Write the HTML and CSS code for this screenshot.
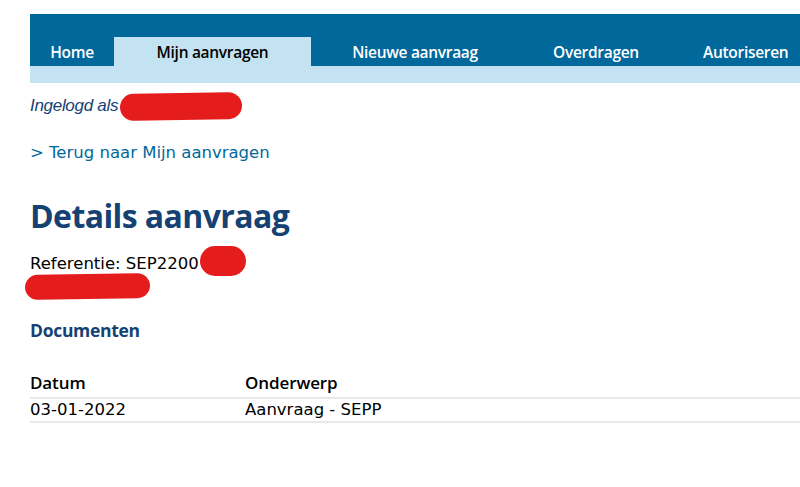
FILE: index.html
```html
<!DOCTYPE html>
<html lang="nl">
<head>
<meta charset="utf-8">
<title>Details aanvraag</title>
<link rel="stylesheet" href="styles.css">
</head>
<body>
<div class="page">
  <nav class="nav">
    <ul class="tabs">
      <li class="tab tab-home"><a href="#">Home</a></li>
      <li class="tab tab-mijn active"><a href="#">Mijn aanvragen</a></li>
      <li class="tab tab-nieuw"><a href="#">Nieuwe aanvraag</a></li>
      <li class="tab tab-over"><a href="#">Overdragen</a></li>
      <li class="tab tab-auth"><a href="#">Autoriseren</a></li>
    </ul>
    <div class="subbar"></div>
  </nav>

  <main class="content">
    <p class="login">Ingelogd als<span class="redact redact-user"></span></p>
    <p class="back"><a href="#">&gt; Terug naar Mijn aanvragen</a></p>
    <h1 class="title">Details aanvraag</h1>
    <p class="ref">Referentie: SEP2200<span class="redact redact-ref"></span></p>
    <div class="redact-line"><span class="redact redact-name"></span></div>
    <h2 class="section">Documenten</h2>
    <table class="docs">
      <thead>
        <tr><th class="col-date">Datum</th><th>Onderwerp</th></tr>
      </thead>
      <tbody>
        <tr><td>03-01-2022</td><td>Aanvraag - SEPP</td></tr>
      </tbody>
    </table>
  </main>
</div>
</body>
</html>
```

FILE: styles.css
```css
html, body {
  margin: 0;
  padding: 0;
  background: #ffffff;
  overflow: hidden;
}
body {
  font-family: "DejaVu Sans", Verdana, sans-serif;
  color: #000;
}
.page {
  width: 770px;
  padding: 14px 0 0 30px;
}
.nav {
  width: 770px;
}
.tabs {
  list-style: none;
  margin: 0;
  padding: 23px 0 0 0;
  display: flex;
  background: #01689b;
  height: 29px;
}
.tab {
  display: flex;
  align-items: center;
  justify-content: center;
  height: 29px;
  font-family: "Open Sans", "Noto Sans", sans-serif;
  font-weight: 600;
  font-size: 15.5px;
  letter-spacing: -0.3px;
}
.tab a {
  color: #ffffff;
  text-decoration: none;
  padding-top: 1px;
}
.tab-home { width: 84px; }
.tab-mijn { width: 197px; }
.tab-nieuw { width: 208px; }
.tab-over { width: 154px; }
.tab-auth {
  flex: 1;
  justify-content: flex-start;
  padding-left: 30px;
}
.tab.active {
  background: #c3e2f2;
}
.tab.active a {
  color: #000000;
}
.subbar {
  height: 17px;
  background: #c3e2f2;
}
.content {
  width: 770px;
}
.login {
  margin: 10px 0 0 0;
  height: 26px;
  font-family: "Liberation Sans", sans-serif;
  font-style: italic;
  font-size: 17px;
  color: #154273;
  letter-spacing: -0.3px;
  display: flex;
  align-items: center;
  line-height: 26px;
}
.redact {
  display: inline-block;
  background: #e41c1c;
  border-radius: 14px;
}
.redact-user {
  width: 122px;
  height: 27px;
  margin-left: 2px;
  transform: rotate(-1deg);
}
.back {
  margin: 24px 0 0 0;
  font-size: 16.5px;
  line-height: 20px;
}
.back a {
  color: #01689b;
  text-decoration: none;
}
.title {
  margin: 33px 0 0 0;
  font-family: "Open Sans", "Noto Sans", sans-serif;
  font-weight: 700;
  font-size: 32px;
  line-height: 40px;
  color: #154273;
  letter-spacing: -0.6px;
}
.ref {
  margin: 18px 0 0 0;
  font-size: 16.5px;
  line-height: 20px;
  height: 20px;
  display: flex;
  align-items: center;
}
.redact-ref {
  width: 46px;
  height: 30px;
  border-radius: 16px;
  margin-left: 1px;
  margin-top: -6px;
}
.redact-line {
  height: 26px;
  margin-left: -5px;
}
.redact-name {
  width: 125px;
  height: 25px;
  border-radius: 13px;
  transform: rotate(-1deg);
}
.section {
  margin: 19px 0 0 0;
  font-family: "Open Sans", "Noto Sans", sans-serif;
  font-weight: 700;
  font-size: 17.5px;
  line-height: 22px;
  color: #154273;
  letter-spacing: -0.3px;
}
.docs {
  margin-top: 31px;
  width: 770px;
  border-collapse: collapse;
}
.docs th {
  text-align: left;
  font-family: "Open Sans", "Noto Sans", sans-serif;
  font-weight: 600;
  font-size: 17px;
  line-height: 22px;
  padding: 0 0 3px 0;
  letter-spacing: -0.1px;
}
.docs .col-date {
  width: 215px;
}
.docs td {
  font-size: 16.5px;
  line-height: 22px;
  padding: 0;
  border-top: 2px solid #e8e8e8;
  border-bottom: 2px solid #e8e8e8;
}
```
